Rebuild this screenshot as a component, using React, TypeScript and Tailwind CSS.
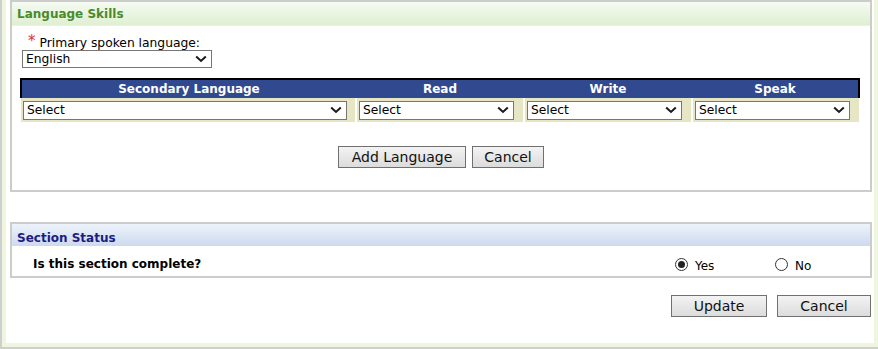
import { useState } from "react";

const Chevron = () => (
  <svg className="pointer-events-none absolute right-[5px] top-1/2 -translate-y-1/2" width="12" height="8" viewBox="0 0 12 8">
    <path d="M1.2 1.5 L6 6 L10.8 1.5" fill="none" stroke="#1a1a1a" strokeWidth="2" />
  </svg>
);

function Dropdown({ value, options, className }: { value: string; options: string[]; className: string }) {
  return (
    <div className={`relative ${className}`}>
      <select
        defaultValue={value}
        className="block appearance-none w-full h-full bg-white border border-[#767676] pl-[3px] py-0 text-[12.3px] leading-[16px] text-black outline-none"
      >
        {options.map((o) => (
          <option key={o}>{o}</option>
        ))}
      </select>
      <Chevron />
    </div>
  );
}

function GrayButton({ label, className }: { label: string; className: string }) {
  return (
    <button
      className={`border border-[#707070] bg-gradient-to-b from-[#f3f3f3] to-[#dcdcdc] text-[14px] leading-none text-[#111] ${className}`}
    >
      {label}
    </button>
  );
}

const levels = ["Select", "Basic", "Intermediate", "Fluent"];
const langs = ["Select", "French", "Spanish", "German", "Mandarin"];

export default function App() {
  const [complete, setComplete] = useState("yes");

  return (
    <div className="w-[878px] h-[349px] bg-white font-['DejaVu_Sans',Verdana,sans-serif] text-black">
      <div className="h-full border-l-2 border-b-2 border-[#cfcfcf]">
        <div className="h-full border-l-4 border-r-4 border-b-4 border-[#eef6e0] pl-1 pr-[2px]">
          {/* Language Skills */}
          <div className="h-[192px] border-2 border-[#cccccc]">
            <div className="h-[24px] flex items-center pl-[5px] bg-gradient-to-b from-[#f5fbf1] to-[#dfefd2] border-b border-[#e8f3e0]">
              <span className="text-[12px] font-bold text-[#4b8a2c]">Language Skills</span>
            </div>
            <div className="pl-[10px] pt-[10px]">
              <div className="flex items-end pl-[6px] text-[12.3px] leading-[14px] h-[14px]">
                <span className="text-[#e0302c] text-[15px] leading-[12px] mr-[4px] self-start -mt-[1px]">*</span>
                <span>Primary spoken language:</span>
              </div>
              <Dropdown value="English" options={["English", "French", "Spanish"]} className="w-[190px] h-[18px]" />
            </div>

            {/* table */}
            <div className="ml-[8px] mt-[10px] w-[840px]">
              <div className="flex h-[20px] bg-[#30498f] border-2 border-b-0 border-black text-white text-[12px] font-bold">
                <div className="w-[334px] flex items-center justify-center">Secondary Language</div>
                <div className="w-[168px] flex items-center justify-center">Read</div>
                <div className="w-[168px] flex items-center justify-center">Write</div>
                <div className="flex-1 flex items-center justify-center">Speak</div>
              </div>
              <div className="flex gap-[2px] h-[24px] pl-[1px]">
                <div className="w-[334px] bg-[#e6e6c4] flex items-center pl-[2px]">
                  <Dropdown value="Select" options={langs} className="w-[324px] h-[19px]" />
                </div>
                <div className="w-[166px] bg-[#e6e6c4] flex items-center pl-[2px]">
                  <Dropdown value="Select" options={levels} className="w-[155px] h-[19px]" />
                </div>
                <div className="w-[166px] bg-[#e6e6c4] flex items-center pl-[2px]">
                  <Dropdown value="Select" options={levels} className="w-[155px] h-[19px]" />
                </div>
                <div className="w-[166px] bg-[#e6e6c4] flex items-center pl-[2px]">
                  <Dropdown value="Select" options={levels} className="w-[155px] h-[19px]" />
                </div>
              </div>
            </div>

            <div className="flex justify-center gap-[6px] mt-[24px]">
              <GrayButton label="Add Language" className="w-[128px] h-[22px]" />
              <GrayButton label="Cancel" className="w-[72px] h-[22px]" />
            </div>
          </div>

          {/* Section Status */}
          <div className="mt-[30px] h-[56px] border-2 border-[#cccccc]">
            <div className="h-[22px] flex items-end pb-[1px] pl-[5px] bg-gradient-to-b from-[#edf3fb] to-[#ccdaee]">
              <span className="text-[12px] leading-[14px] font-bold text-[#1c1c84]">Section Status</span>
            </div>
            <div className="h-[30px] flex items-center pt-[6px] text-[12px] font-bold">
              <span className="pl-[21px] w-[663px]">Is this section complete?</span>
              <label className="flex items-center w-[100px] font-normal text-[12px]" onClick={() => setComplete("yes")}>
                <span className="w-[13px] h-[13px] rounded-full border border-[#333] bg-white flex items-center justify-center mr-[7px]">
                  {complete === "yes" && <span className="w-[7px] h-[7px] rounded-full bg-[#222]" />}
                </span>
                <span className="mt-[3px]">Yes</span>
              </label>
              <label className="flex items-center font-normal text-[12px]" onClick={() => setComplete("no")}>
                <span className="w-[13px] h-[13px] rounded-full border border-[#333] bg-white flex items-center justify-center mr-[7px]">
                  {complete === "no" && <span className="w-[7px] h-[7px] rounded-full bg-[#222]" />}
                </span>
                <span className="mt-[3px]">No</span>
              </label>
            </div>
          </div>

          <div className="flex justify-end gap-[10px] mt-[17px] pr-[1px]">
            <GrayButton label="Update" className="w-[96px] h-[22px]" />
            <GrayButton label="Cancel" className="w-[94px] h-[22px]" />
          </div>
        </div>
      </div>
    </div>
  );
}
